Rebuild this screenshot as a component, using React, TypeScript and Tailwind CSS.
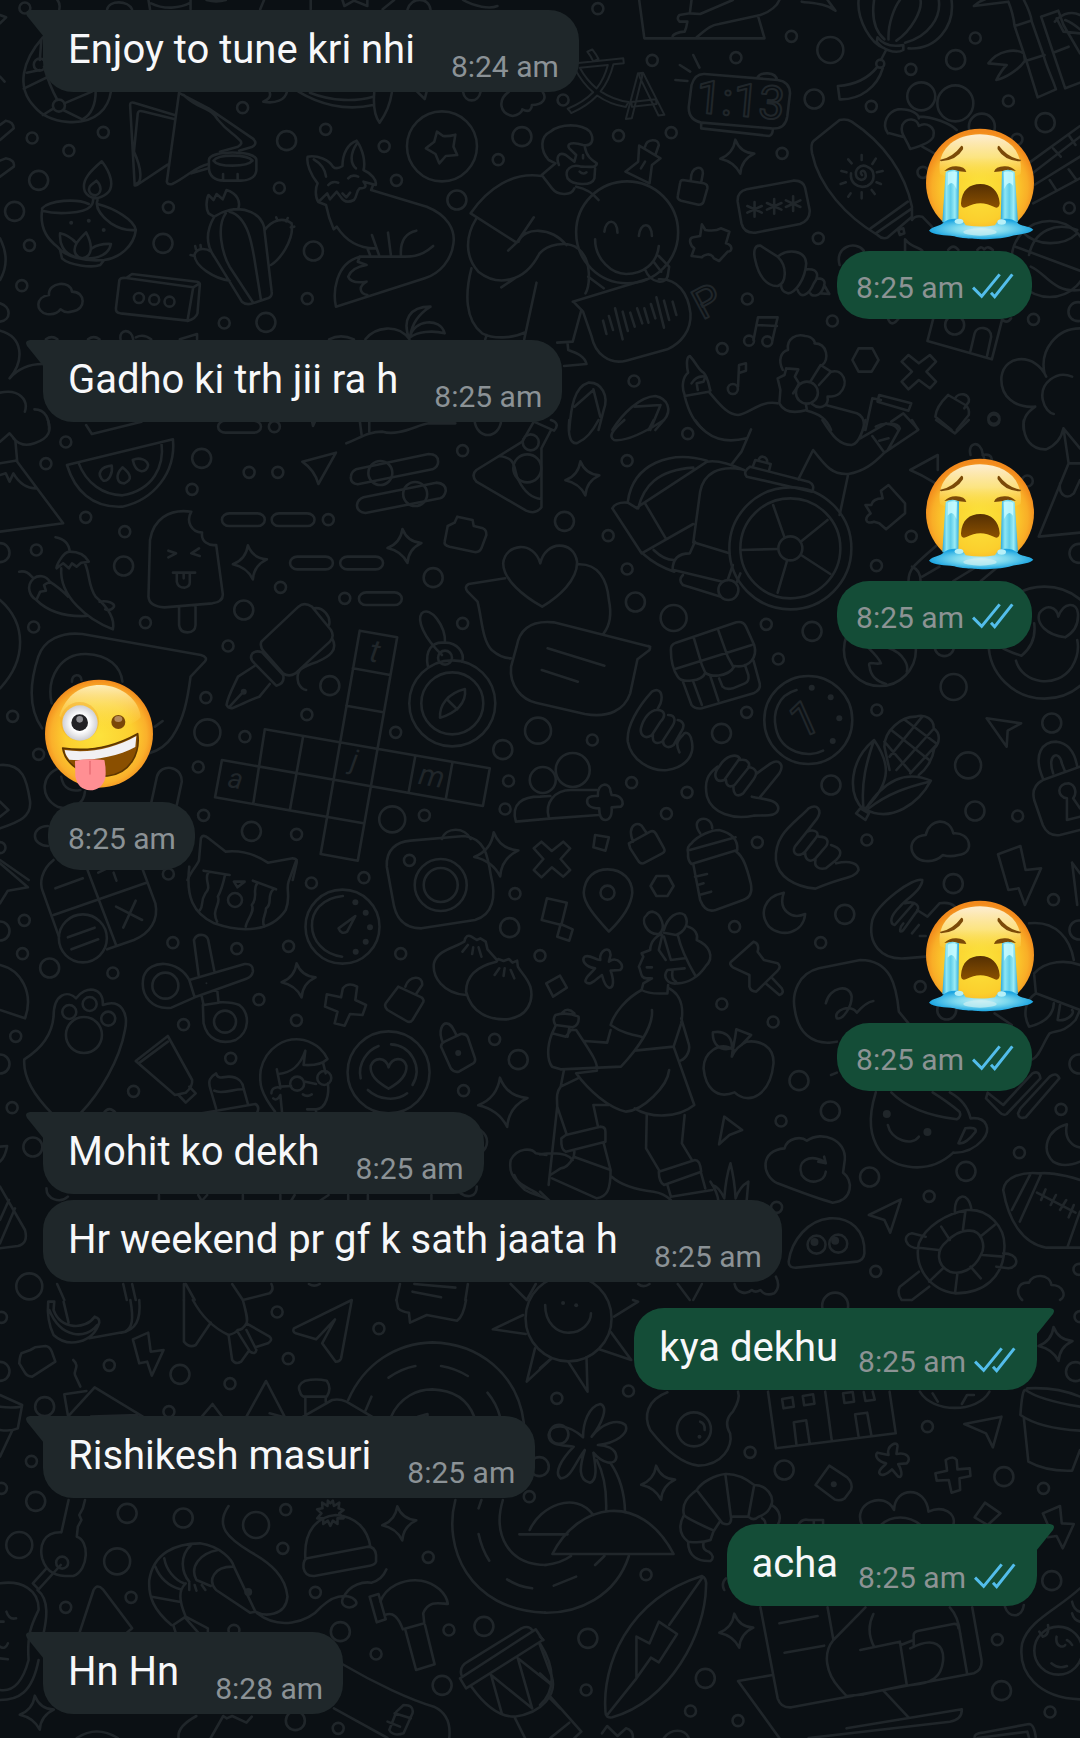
import React from 'react';
import clsx from 'clsx';

type Side = 'in' | 'out';
type EmojiName = 'sob' | 'zany';

interface Message {
    id: number;
    side: Side;
    time: string;
    text?: string;
    emoji?: EmojiName;
    tail?: boolean;
    spacing: string;
}

const messages: Message[] = [
    { id: 1, side: 'in', text: 'Enjoy to tune kri nhi', time: '8:24 am', tail: true, spacing: 'mt-0' },
    { id: 2, side: 'out', emoji: 'sob', time: '8:25 am', spacing: 'mt-9' },
    { id: 3, side: 'in', text: 'Gadho ki trh jii ra h', time: '8:25 am', tail: true, spacing: 'mt-[21px]' },
    { id: 4, side: 'out', emoji: 'sob', time: '8:25 am', spacing: 'mt-9' },
    { id: 5, side: 'in', emoji: 'zany', time: '8:25 am', spacing: 'mt-[30px]' },
    { id: 6, side: 'out', emoji: 'sob', time: '8:25 am', spacing: 'mt-[30px]' },
    { id: 7, side: 'in', text: 'Mohit ko dekh', time: '8:25 am', tail: true, spacing: 'mt-[21px]' },
    { id: 8, side: 'in', text: 'Hr weekend pr gf k sath jaata h', time: '8:25 am', spacing: 'mt-1.5' },
    { id: 9, side: 'out', text: 'kya dekhu', time: '8:25 am', tail: true, spacing: 'mt-[26px]' },
    { id: 10, side: 'in', text: 'Rishikesh masuri', time: '8:25 am', tail: true, spacing: 'mt-[26px]' },
    { id: 11, side: 'out', text: 'acha', time: '8:25 am', tail: true, spacing: 'mt-[26px]' },
    { id: 12, side: 'in', text: 'Hn Hn', time: '8:28 am', tail: true, spacing: 'mt-[26px]' }
];

/**
 * Wallpaper. Each tile has its own fine grid (about three units to a pixel);
 * x, y and sx place the grid on the wallpaper.
 */
interface Tile {
    x: number;
    y: number;
    sx: number;
    small: number[][];
    medium: number[][];
    large?: number[][];
    rings?: number[][];
    dots?: number[][];
    sparks?: number[][];
    pills?: number[][];
    letters?: { x: number; y: number; size: number; turn: number; value: string }[];
    lines: string[];
}

const SY = 1 / 3;

const tiles: Tile[] = [
    {
        x: 0, y: 0, sx: 0.38265,
        small: [[84, 414], [180, 452], [270, 397], [634, 323], [851, 388], [1004, 439], [1036, 541], [1302, 479], [730, 564], [440, 622], [77, 736], [57, 857], [586, 969], [803, 896], [65, 24]],
        medium: [[101, 541], [38, 634], [426, 730], [749, 422], [819, 753], [1194, 600], [1364, 410], [695, 967]],
        rings: [[1155, 439, 35], [363, 894, 5], [403, 899, 5], [443, 905, 5], [104, 194, 6], [154, 317, 6]],
        dots: [[186, 668, 2], [232, 662, 2], [271, 690, 2]],
        lines: [
            // beach ball
            'M112 112C60 180 40 260 90 320C130 375 220 380 260 340C280 320 288 290 290 274M108 120L104 180M104 210L70 218M115 200C125 240 135 270 150 300M130 228L62 266M140 325L112 345M168 310L240 275M165 330L215 358M250 275C250 310 240 345 215 358',
            // folded snack and dip
            'M352 556L340 315Q340 305 350 308L456 345M358 550C370 545 372 510 350 455L360 340Q362 330 372 334L455 357M352 556Q356 558 362 552L438 494M468 278L436 545Q438 555 450 552C490 530 510 500 545 492M470 280L545 325L660 415Q675 430 660 440L625 452M480 285C520 330 550 320 570 360C600 400 600 390 628 422Q635 432 622 440L575 455M500 520L545 505',
            'M546 480C546 450 670 450 670 480V510Q668 540 630 542H585Q548 540 546 505ZM558 482C570 502 645 502 660 482C645 462 570 462 558 482ZM583 540V522M621 540V522',
            // oil lamp
            'M266 484C290 520 300 560 280 580C260 600 235 600 222 575C210 540 240 510 266 484ZM252 542C268 560 265 580 250 586C232 586 228 565 238 555ZM110 625C130 600 200 595 232 612M110 632C150 645 220 640 236 620Q245 610 243 595M255 600C250 615 255 640 290 670C310 685 335 692 354 690M255 612C300 625 350 660 355 690C350 740 310 775 272 780C220 785 170 770 150 740C115 710 105 670 110 630M157 750L162 775C180 795 240 805 262 795L272 780M157 700C155 730 165 760 195 770M157 700Q180 705 200 730C190 750 195 770 215 775C240 770 245 740 225 697Q205 720 200 730M240 745Q260 730 290 732C285 760 265 775 225 776',
            'M122 942C92 935 92 890 128 885C125 845 185 840 188 875C225 875 225 930 190 934C175 940 165 935 158 928C150 942 135 944 122 942Z',
            'M303 925L312 840Q315 832 330 834L505 862L490 962L315 940Q302 938 303 925M330 834L345 822L515 845Q524 848 522 858L516 940Q512 955 490 963M505 862L522 850',
            // cactus
            'M545 640C535 620 542 590 545 585L558 600L566 582L582 598L592 570C620 580 630 605 622 628M560 650Q550 645 545 640M560 650C540 690 535 730 560 770L632 905Q645 918 665 908L700 895Q712 890 710 875L690 680C680 640 640 620 600 630Q580 635 560 650M590 640C565 680 580 760 600 800L660 905M600 635C650 650 660 740 668 800L682 900M692 690C710 660 740 650 762 670C770 720 730 780 708 795M600 842C560 835 510 800 508 765C515 740 540 745 552 755M725 662L722 652M748 664L752 654M760 682L769 680M512 748L510 738M525 745L524 735M508 768L498 765',
            // fox
            'M832 606C822 590 825 560 830 550C812 525 800 490 804 470C830 465 860 480 870 500Q880 510 895 498C895 460 910 430 932 422C950 450 955 490 950 510C970 520 985 540 982 555L950 545C960 560 955 565 940 565C930 575 935 585 925 600C905 612 895 600 890 590L880 575L862 598L855 580ZM975 555L970 570L1115 620C1170 645 1190 690 1185 730C1180 780 1150 820 1110 835L878 920C870 880 875 790 940 770H1060C1100 770 1120 750 1132 738M832 606L852 615C858 650 865 670 872 688L880 680C905 725 940 745 980 745M972 705L992 770M1014 698L1022 770M1048 770C1045 730 1055 700 1088 692M960 745L968 768M940 770L935 785L958 795C930 800 915 815 910 830C915 845 930 850 958 845C935 860 940 880 960 885M820 478C838 490 850 510 852 530M932 432C915 460 915 490 930 505M858 555Q868 542 884 548M910 535Q920 522 936 530M895 580L905 592L915 578',
            'M1142 395L1158 408Q1170 410 1190 404L1185 440L1195 465L1165 468L1148 490L1138 462L1113 445L1135 425Z',
            'M750 275C745 300 720 312 688 305Q710 295 705 278M780 275C830 310 900 335 975 315M810 278C870 305 930 305 975 290M978 278C975 320 980 350 992 368C1010 340 1020 310 1024 278M1090 275L1110 297L1115 275M1210 275C1215 310 1250 310 1256 275M1330 275C1300 300 1305 340 1340 348C1355 345 1365 335 1365 328C1385 340 1390 325 1390 315C1420 315 1430 295 1418 275',
            'M155 28Q158 10 150 0M280 28C285 0 335 0 345 28M388 0L392 28M498 0V28M395 10C430 30 470 25 498 8M540 0Q565 8 590 0M680 28L690 0M812 28V0M895 0L900 18L925 2L960 18V0M1000 28L1030 0M1065 28C1075 -10 1120 -10 1125 28M1210 0C1240 20 1280 28 1300 18',
            'M0 45L16 52L0 70M0 230L12 245M0 375L15 362Q35 365 36 385L0 420M0 482L15 475Q40 480 36 500L0 530M0 715C20 760 20 800 0 840M0 910C30 920 30 960 0 965M0 992C60 1010 65 1080 25 1135Q60 1090 115 1092M0 1178C50 1165 75 1200 65 1235M90 1228C120 1228 130 1260 128 1290',
            // sitting figure
            'M1415 528C1340 515 1275 565 1230 640L1350 728L1395 652M1350 728L1328 752M1245 655C1215 710 1215 770 1250 815C1300 860 1370 850 1410 760C1430 735 1480 720 1510 745C1550 780 1540 860 1530 880M1232 805C1215 880 1215 960 1260 1000C1290 1018 1340 1015 1370 998M1310 862L1345 835M1402 848L1370 1018M1355 725C1370 680 1440 680 1480 735M1268 1018L1272 1005',
            'M860 1018Q890 1000 925 1018M955 1018C980 980 1040 970 1070 1018C1050 960 1070 920 1125 920C1090 945 1075 980 1072 1010C1080 960 1150 950 1162 1000C1130 990 1090 995 1072 1012M120 1018Q135 1005 150 1018M230 1018Q245 1005 260 1018M315 1018C310 985 345 985 348 1018M355 1012Q375 1000 395 1018M470 1018L515 1002V1018'
        ]
    },
    {
        x: 540, y: 0, sx: 0.34439,
        small: [[168, 26], [326, 181], [569, 173], [730, 109], [67, 300], [228, 407], [381, 398], [703, 460], [808, 715], [602, 897], [849, 963], [529, 1046], [273, 1143], [1077, 208], [962, 319], [1264, 114], [1360, 303], [1537, 624], [1433, 958], [1318, 1255], [1112, 517], [1385, 418]],
        medium: [[796, 297], [1207, 179], [1467, 368], [1204, 975], [1562, 935]],
        large: [[843, 150]],
        rings: [[1107, 289, 14], [1206, 310, 18], [1283, 380, 13], [988, 191, 4], [253, 697, 51], [607, 1022, 5], [660, 1024, 5], [560, 1167, 5], [1480, 777, 38], [775, 1178, 11]],
        sparks: [[573, 470, 1]],
        letters: [
            { x: 598, y: 105, size: 66, turn: -6, value: '文' },
            { x: 645, y: 117, size: 62, turn: -6, value: 'A' },
            { x: 739, y: 116, size: 46, turn: 5, value: '1:13' },
            { x: 714, y: 314, size: 42, turn: -28, value: 'P' }
        ],
        lines: [
            'M187 695C190 655 225 655 225 698M287 708C290 665 325 665 325 708M160 718C160 780 210 822 250 822C300 822 340 790 345 738M305 808C320 850 370 860 372 820L375 800L345 768M330 785L352 815',
            // voice bubble
            'M95 905L310 838M345 838C400 835 430 880 437 940C440 990 410 1030 370 1048L250 1082C200 1095 160 1060 150 1010L125 935L97 905M183 962L193 1002M200 948L212 990M218 925L240 1018M240 935L255 993M262 938L275 980M282 925L297 970M303 925L315 968M322 912L335 955M338 892L360 983M360 902L375 960M385 905L396 945',
            'M140 830L185 865M120 930L95 1025L50 1028M105 560C130 565 155 580 170 600M80 1030L82 1050C110 1060 130 1070 135 1092L70 1098',
            'M100 565C90 590 50 585 35 565L5 525L45 490L25 480C0 450 0 410 30 395C60 370 120 370 145 395C160 420 150 440 125 435C95 425 75 430 85 445L105 465L100 485L75 465C55 455 45 470 55 495M130 440C135 470 150 480 165 490C165 505 140 500 120 500C90 490 70 510 80 535C95 555 150 560 158 535L160 505M115 515Q125 525 135 517M125 465V475',
            // lantern
            'M925 0C920 60 960 130 1000 145M970 0C960 70 980 100 1000 118M1012 118C1010 70 1030 20 1045 0M1060 128C1130 110 1165 50 1158 0M1070 145C1150 150 1205 80 1195 0M1035 122C1080 90 1110 30 1105 0M980 112C1000 140 1030 140 1055 135V150C1030 165 990 145 978 125ZM1005 150L990 180M980 200C950 240 910 255 865 258L870 298C930 300 980 260 995 205',
            'M288 0L303 115H652L633 48M440 0L435 40L405 45Q395 55 405 65H428Q425 85 420 95C400 95 385 105 385 110M435 40L465 42L560 0M455 112C490 80 500 75 520 72L640 45C670 35 690 15 695 0M760 5C790 10 830 10 858 32L835 0',
            // alarm clock
            'M478 222L690 240Q725 245 726 280L718 350Q712 390 670 385L470 368Q430 360 432 320L440 255Q450 220 478 222ZM468 368V385L665 408Q675 405 676 390M632 232C640 215 685 215 688 240M445 165L463 203M406 195L436 215M393 240L428 243',
            'M288 437L350 475L325 495L318 550L248 515L285 485ZM305 440C310 415 345 415 345 435L335 465M305 485L293 505',
            'M415 540L475 550Q488 553 486 565L475 605Q472 615 460 614L410 602Q398 598 400 588L407 548Q408 540 415 540ZM438 540C438 495 475 495 473 520L468 548',
            'M600 568L735 542Q765 540 770 565L783 630Q785 660 755 672L625 698Q592 700 585 670L574 605Q572 575 600 568ZM623 606V650M602 618L644 638M602 638L644 618M680 597V641M659 609L701 629M659 629L701 609M735 589V633M714 601L756 621M714 621L756 601',
            'M470 673L480 690Q510 695 525 685L550 695L540 730C560 735 560 755 545 755L520 783L505 775C495 755 475 765 470 772L440 768L448 745C435 735 430 715 445 712L465 708Z',
            // shell
            'M640 737C620 735 620 760 625 780C635 830 660 860 690 858C715 850 720 800 690 770ZM690 770C720 745 770 750 773 790C770 840 740 880 720 880C700 875 700 860 700 855M775 808C810 805 810 830 795 850C780 890 755 895 748 870M805 835C830 835 830 850 820 870C810 890 790 890 785 880M825 855L840 882L815 880',
            'M620 1020L633 952H690L675 1020M630 975L688 978M575 1160L578 1095L598 1090V1112L580 1118',
            // lotion
            'M870 360Q890 355 905 365C1000 430 1060 520 1080 620L1080 650L1010 712Q995 720 980 705C890 650 810 560 790 460Q785 430 795 422ZM960 685L1068 605M975 700L1080 625M1080 660Q1090 645 1110 650L1138 680M1040 690L1055 685L1058 700L1045 705ZM935 525C925 515 940 505 945 520C950 540 930 545 920 532C910 510 930 490 950 500C975 510 975 545 950 558C920 568 900 545 903 520M934 465V480M934 577V595M975 476L965 492M895 478L905 490M875 513L890 517M995 513L978 517M990 552L977 547M873 552L888 547M902 580L895 590M963 570L972 582',
            'M1010 400C990 370 1010 335 1040 328C1080 325 1100 345 1100 355M1015 400L1058 412M1100 350C1140 350 1190 370 1210 390M1110 440L1145 460M1075 447C1060 410 1045 400 1052 375C1065 350 1095 355 1100 378C1120 365 1150 380 1142 410Q1135 430 1075 447Z',
            // bamboo
            'M1260 18L1360 5C1370 30 1375 50 1378 78L1412 182L1445 292L1498 268C1490 240 1470 200 1462 165L1428 65C1425 40 1415 20 1405 0M1260 18Q1280 0 1300 -5M1378 78L1425 62M1412 182L1465 165M1455 50L1490 158L1525 265L1568 248M1455 50L1505 32L1520 75L1568 160M1490 158L1535 140M1302 190C1330 150 1380 145 1405 160L1408 182C1390 210 1350 235 1325 240Q1340 210 1355 195ZM1495 65C1520 35 1550 35 1568 45M1500 55L1520 95L1568 100M1525 60Q1545 68 1568 88',
            'M1425 485L1568 378M1430 520L1568 410M1435 555L1568 470M1432 610L1568 535M1490 445L1512 470M1535 405L1555 435M1480 540L1500 572M1535 508L1558 540',
            'M1380 740L1568 812M1420 765C1435 690 1500 665 1560 690M1400 695C1440 740 1520 740 1560 700M1425 800C1470 820 1490 880 1568 870',
            'M870 795C855 740 915 720 940 752M1060 752V718C1080 745 1100 740 1110 752M1185 750Q1200 730 1215 750M1270 750Q1280 735 1290 748Q1300 735 1315 750M1010 955Q1020 985 1042 955',
            'M1142 955L1125 1023L1312 1078L1342 958M1250 1053L1262 1000C1270 975 1310 980 1310 1010L1298 1068M1340 955Q1355 975 1368 955',
            'M925 1045H965L983 1080L963 1115H925L907 1080Z',
            'M1050 1085L1070 1065L1100 1090L1132 1065L1150 1085L1122 1115L1150 1145L1132 1165L1100 1140L1070 1168L1050 1145L1080 1115Z',
            // dancer
            'M705 1110C690 1080 700 1055 720 1050C715 1015 745 1000 770 1008C795 1010 800 1030 797 1030C835 1030 840 1080 820 1095M715 1105L750 1108L740 1130L752 1150L745 1165L735 1180M715 1105L710 1125L690 1135L698 1170L695 1210C710 1240 740 1240 775 1230L772 1212M785 1145L815 1095L845 1115L810 1155M845 1115C880 1105 900 1150 870 1180C860 1190 835 1190 835 1190C840 1220 810 1230 790 1212',
            'M420 1188L490 1175C530 1225 550 1245 575 1245C610 1240 640 1200 690 1210M420 1188C430 1230 450 1270 475 1290M775 1232C810 1240 835 1260 845 1290M830 1215L920 1240Q945 1250 940 1290M420 1185C410 1160 415 1130 430 1118C425 1095 425 1070 435 1068C455 1090 460 1110 475 1118C490 1135 490 1160 495 1172M440 1150Q455 1125 480 1130L475 1145L455 1150L458 1170',
            'M945 1290L965 1195L990 1200M985 1185L1078 1210L1070 1232L980 1205ZM975 1280C1000 1265 1030 1270 1040 1290M1020 1265L1055 1240L1098 1288M1185 1185L1235 1215Q1248 1225 1245 1245L1210 1290M1185 1185Q1150 1220 1148 1250L1195 1290M1205 1195C1215 1175 1250 1180 1245 1205L1232 1225',
            'M1568 985C1500 985 1450 1050 1465 1120M1470 1130C1440 1060 1350 1060 1340 1130C1335 1190 1380 1225 1438 1220C1410 1240 1400 1260 1405 1290M1545 1130C1500 1110 1450 1150 1460 1200C1465 1225 1480 1240 1492 1242',
            'M85 1290C90 1220 100 1160 140 1148C180 1145 200 1190 185 1230L170 1290M155 1170L100 1220M155 1168L175 1250M210 1290C240 1240 290 1190 335 1188C370 1195 385 1230 360 1260L335 1290M350 1215L275 1220M350 1215L320 1290'
        ]
    },
    {
        x: 0, y: 420, sx: 0.38265,
        small: [[120, 131], [172, 66], [502, 208], [224, 292], [326, 335], [95, 390], [88, 621], [380, 608], [651, 157], [726, 157], [733, 502], [858, 299], [717, 20], [901, 535], [596, 678], [538, 833], [802, 884], [640, 950], [1034, 937], [518, 1041], [532, 1186], [775, 1243], [1109, 1186], [1209, 92], [1209, 610], [1329, 1083], [1320, 1167], [101, 1003], [33, 889], [440, 1362], [0, 1283], [1070, 1321]],
        medium: [[527, 115], [323, 438], [637, 570], [1132, 473], [862, 797], [657, 1234], [1314, 989], [0, 398]],
        large: [[542, 937], [1025, 1198], [1406, 932]],
        rings: [[994, 159, 12], [1085, 222, 12], [1387, 67, 8], [1378, 145, 14], [1182, 850, 43], [1182, 850, 31], [1163, 713, 7]],
        dots: [[637, 815, 3]],
        sparks: [[653, 427, 1], [1057, 378, 1], [1297, 1303, 1.3]],
        pills: [[580, 280, 112, 38], [710, 280, 112, 38], [758, 410, 112, 38], [889, 410, 112, 38], [938, 517, 112, 38], [570, 2, 112, 36]],
        letters: [
            { x: 373, y: 662, size: 32, turn: 10, value: 't' },
            { x: 353, y: 769, size: 28, turn: 10, value: 'j' },
            { x: 234, y: 788, size: 28, turn: 10, value: 'a' },
            { x: 430, y: 786, size: 30, turn: 10, value: 'm' }
        ],
        lines: [
            // watermelon
            'M175 135L452 58C460 160 400 240 320 260C240 265 195 210 175 135ZM205 128C225 190 270 225 320 226C400 210 430 140 422 68M270 182C250 160 265 140 292 137C295 160 285 185 270 182ZM320 142C300 165 305 190 325 190C345 180 345 165 320 142ZM347 120C365 110 385 120 387 135C385 160 355 165 347 120Z',
            'M790 125L878 98L832 192Q822 150 790 125Z',
            'M930 148L1120 102Q1145 102 1145 125Q1145 140 1130 148L935 193Q915 190 917 170Q918 155 930 148ZM950 232L1140 188Q1165 190 1165 212Q1162 230 1150 235L955 279Q932 275 933 255Q935 238 950 232Z',
            'M1365 65L1245 150Q1230 165 1245 185L1375 272Q1400 285 1415 262V85L1440 30M1305 108C1355 115 1340 150 1355 180C1370 215 1390 235 1415 237M1365 65L1395 5L1448 32Q1465 10 1440 0',
            'M905 70C940 55 960 35 1000 35C1040 50 1090 15 1120 10H1190M940 0L945 45M965 0V35M225 15L240 42L370 5M815 0L818 18L825 0M1240 0C1245 60 1305 60 1310 0',
            'M0 335L165 310L45 125L40 60L25 40L0 65M0 130L40 122M0 165L15 160L25 185L35 160C50 190 70 205 95 205M35 55C50 75 70 78 90 70C130 55 135 30 125 0',
            // ice cream
            'M388 530L392 360C400 300 440 265 500 275C485 305 500 335 528 338C525 365 545 378 565 375L582 520Q585 545 555 550L430 562Q390 560 388 530ZM468 563V615Q470 637 490 637Q510 637 511 615V560M440 392L460 400L440 412M520 385L500 400L522 408M452 458L510 458M462 460V485Q465 503 482 503Q497 500 496 485V460M480 462V475',
            // chillies
            'M145 352Q180 360 182 395C165 395 145 440 148 445L165 430L180 445L188 430L200 440L212 428L232 425C220 400 200 395 182 395M160 445C155 530 230 600 295 628C300 600 290 570 250 530C230 500 235 460 222 430M50 455C75 450 80 470 88 475C65 500 80 530 95 540L105 515L120 512L115 495L130 485C120 465 100 465 88 475M95 540C130 580 180 590 225 588M130 485C150 500 170 520 178 530M260 545C280 540 300 550 298 560Q290 575 275 568',
            'M1170 318L1188 308L1195 290L1235 300L1238 318L1262 325Q1272 330 1271 345L1258 385Q1253 398 1240 396L1175 380Q1160 375 1162 365Z',
            'M1417 560C1370 530 1315 480 1315 430C1320 370 1395 360 1412 430C1425 360 1500 360 1508 425C1510 480 1460 530 1417 560Z',
            'M1320 475L1225 492Q1212 500 1222 515L1248 545C1260 600 1260 660 1285 690Q1310 715 1335 715',
            // fountain pen
            'M683 665Q678 680 690 695L740 760Q755 772 772 760L862 665Q875 650 865 630L815 560Q795 545 780 560ZM660 700Q670 690 685 697L740 765Q745 790 722 797L665 730Q650 715 660 700ZM665 738L622 770C610 800 595 830 592 855Q598 868 610 863C640 850 660 835 678 830L705 792M600 860L632 820M820 565C845 560 865 590 860 615M868 655C885 690 860 710 830 725C790 740 770 750 780 790Q788 808 800 810',
            // crossword
            'M940 632L1038 652L935 1322L838 1302ZM922 745L1020 765M905 857L1002 877M692 928L1280 1045L1262 1158L580 1020L562 1132L950 1210M692 928L662 1150M792 950L758 1168M1085 1010L1068 1117M1182 1030L1165 1137',
            // compass
            'M1118 738C1110 690 1130 665 1160 668C1195 665 1215 700 1208 725M1155 705C1105 650 1090 600 1102 580C1125 555 1165 620 1163 668M1215 807C1220 850 1190 880 1150 893C1148 855 1170 820 1215 807ZM1170 840L1195 868',
            'M110 925C70 860 80 780 100 710C115 660 160 635 215 642L525 705Q545 712 535 725L498 770C490 840 480 900 450 950Q430 985 390 1000M135 850C120 770 160 700 225 702C285 705 315 740 320 785M188 785C188 760 212 760 213 780M405 920L425 903M0 540C70 610 70 720 0 805M0 1035C60 1030 70 1080 78 1140C85 1190 50 1205 0 1225M0 1145L22 1170L0 1190M155 1045C110 1060 100 1130 150 1160C190 1175 220 1150 222 1115M160 1070C165 1110 190 1115 210 1110M395 1150L410 1070C420 1030 475 1035 475 1085L462 1155M125 1218C80 1220 80 1275 125 1278M0 1320L75 1380',
            'M490 1380C500 1350 520 1330 520 1320L525 1255Q530 1240 545 1255L590 1295C630 1290 670 1305 700 1328L765 1315Q778 1315 775 1330L765 1380',
            'M1155 1257C1165 1220 1215 1220 1230 1257M1395 1285L1415 1265L1442 1293L1472 1265L1490 1285L1465 1317L1490 1350L1472 1370L1442 1342L1415 1372L1395 1350L1420 1317Z'
        ]
    },
    {
        x: 540, y: 420, sx: 0.34439,
        small: [[429, 41], [253, 122], [198, 347], [253, 447], [657, 613], [692, 717], [600, 877], [152, 960], [266, 1088], [367, 1181], [427, 1117], [631, 1267], [949, 1260], [977, 437], [978, 870], [1078, 349], [1387, 1188], [1318, 0], [1415, 183]],
        medium: [[71, 304], [277, 546], [790, 634], [527, 940], [845, 1095], [1486, 909], [1263, 1173], [1565, 400], [1174, 680]],
        large: [[388, 594], [1201, 801], [1243, 1036]],
        rings: [[727, 385, 61], [727, 385, 50], [727, 385, 12], [547, 510, 10], [1465, 668, 56], [987, 690, 36], [779, 900, 44], [8, 1080, 13], [95, 1050, 17]],
        dots: [[789, 803, 3], [844, 832, 3], [869, 895, 3], [850, 963, 3]],
        sparks: [[123, 175, 1]],
        letters: [{ x: 811, y: 734, size: 48, turn: -24, value: '1' }],
        lines: [
            'M85 0C80 50 90 75 110 68C140 55 160 20 170 0M245 0C205 35 200 50 215 60C250 65 300 40 360 0M315 30L330 0M450 0C490 60 540 70 600 55M613 28L585 95L555 135',
            // wheelchair
            'M710 352L677 255M757 365L835 300M758 405L843 462M718 420L690 518M690 387L583 390M485 122C380 90 270 130 255 245M210 265Q220 245 255 248L282 265M210 265L295 400L445 312M305 250L365 355M282 262L485 125C520 118 560 135 592 150M285 265C300 200 340 150 445 143M450 365L435 400C400 400 385 420 385 450M445 368L465 215C475 160 520 135 585 148M450 368L550 400M330 390C350 410 370 420 388 420M300 402C330 430 360 445 390 455M388 450L530 485M610 140L780 185Q800 195 790 215L600 170Q588 155 610 140ZM618 140L625 120L670 132L665 152M635 122C635 105 660 105 660 128M415 465Q400 480 415 495L525 530M545 480L560 435M572 485L582 460',
            'M750 178L793 90C830 140 850 165 895 162L870 285M895 162C940 155 970 130 1000 98L965 48M820 0C850 50 870 75 905 75C930 70 940 20 945 0M930 55L1005 10M1010 12Q1040 10 1045 25L1010 90M1000 98L1098 30L1080 0M985 62L1012 55M1150 0L1205 40L1245 0',
            'M1155 105Q1110 130 1075 150Q1110 165 1145 188M1155 105L1155 150M1250 105C1240 65 1280 60 1285 100L1290 115M1285 105Q1310 100 1312 118',
            'M1012 195L990 212L995 235C975 235 965 240 962 255L945 255L960 280C940 295 945 315 970 305L985 310L1005 328L1060 280V250Z',
            'M1405 0C1400 60 1430 90 1470 88C1500 75 1515 50 1520 25L1568 85M1520 25L1535 130L1448 350L1568 338M1535 130H1568M1510 190C1505 225 1530 240 1550 220L1568 180',
            'M1070 483C1070 450 1080 440 1150 378M1080 440Q1105 450 1105 483M1110 470L1160 440M1200 483L1260 445M1280 483L1330 440',
            'M1382 722C1400 790 1500 810 1545 740Q1568 700 1560 660M1525 652C1470 645 1440 610 1450 580C1470 550 1500 560 1505 590C1520 545 1560 545 1562 580C1565 620 1545 640 1525 652ZM1435 610C1440 650 1430 680 1398 707Q1360 695 1340 682',
            'M955 685C970 700 985 715 990 730C970 735 950 720 957 740C960 770 980 785 1005 792M1010 683C1060 700 1070 740 1065 755',
            // chat bubbles
            'M110 433C170 430 195 480 200 540C210 590 200 620 185 640M320 680L40 607C-30 600 -60 630 -68 680L-84 740C-90 800 -50 840 -12 848L130 882C200 895 245 870 262 820L283 718L318 690Q322 682 315 678M22 685L187 737M5 750L110 785',
            // present
            'M380 690Q378 675 395 668L570 607Q590 602 598 620L622 675C632 710 610 745 565 738C545 775 490 770 480 758C470 785 410 790 400 770Q380 740 380 690ZM390 748L615 675M447 655L470 735L480 758M518 632L545 710L560 738M415 785L440 855Q450 868 470 865L620 820Q642 810 638 790L620 722M445 785L470 855M495 770L518 842M520 775L530 800Q540 810 560 805L595 790Q608 785 605 765L595 735',
            'M745 810C690 825 675 880 685 925C700 1000 780 1015 822 992',
            // hands
            'M325 815C285 860 250 920 255 965C265 1020 320 1055 370 1050C430 1040 450 1000 440 960C435 935 420 935 415 945M325 815C350 800 358 825 350 850L340 870C365 870 365 890 350 905L325 945C305 960 290 945 293 925C300 895 320 870 340 870M372 885C395 885 395 905 380 925L355 965C335 975 325 965 328 945M400 900C420 905 420 920 410 935L388 975C370 990 355 975 358 960M415 945C395 965 395 975 405 997',
            'M520 1040C540 1005 570 1000 580 1015L535 1080C510 1090 500 1065 520 1040ZM580 1020C605 1015 615 1035 600 1050L565 1095C550 1105 540 1095 540 1080M605 1040C630 1045 635 1060 615 1085L590 1120C570 1135 560 1120 562 1100M630 1060L670 1030C695 1015 710 1035 695 1060L640 1130M615 1130C660 1140 690 1140 692 1165C690 1190 660 1185 620 1187C560 1200 500 1180 485 1130C475 1080 490 1060 515 1040',
            'M685 1320C680 1240 740 1210 780 1165C805 1150 820 1170 805 1195L775 1235C800 1225 815 1240 800 1255L770 1295C750 1315 730 1300 740 1280L775 1235M810 1250C840 1250 840 1270 825 1285L800 1315C785 1330 770 1320 770 1300M845 1275C875 1285 880 1300 860 1320L830 1345C810 1350 795 1340 800 1320M860 1330C900 1320 925 1330 925 1350C915 1375 880 1370 800 1406C740 1400 690 1370 685 1320',
            // corn
            'M1000 980C1000 930 1050 890 1090 890C1120 880 1145 900 1143 925C1165 940 1160 970 1145 985C1140 1020 1120 1050 1100 1065M1000 980L1015 1050M1060 900L1150 970M1020 930L1130 1020M1000 965L1075 1055M1110 890L1015 1010M1140 930L1035 1050M1155 970L1075 1060M970 960C900 1020 890 1120 940 1170C930 1090 950 1020 970 960ZM970 960C1010 1020 1030 1080 945 1165M945 1168C1000 1080 1060 1050 1135 1082C1100 1150 1020 1210 945 1168ZM955 1165C1010 1120 1070 1100 1130 1085M930 1165L918 1180L945 1200L955 1180Z',
            'M1297 895L1397 910L1358 932L1355 980Z',
            'M1460 1075C1430 1000 1460 965 1500 965C1540 970 1555 1010 1560 1040M1568 1040L1460 1080Q1425 1100 1435 1140L1460 1215Q1475 1250 1510 1245L1568 1230M1490 1060C1470 1000 1510 990 1515 1030L1525 1055M1530 1135L1530 1200L1568 1190M1530 1135C1500 1130 1500 1090 1535 1090C1555 1095 1560 1120 1548 1135L1568 1165',
            'M25 1190C15 1150 40 1110 90 1110H165M35 1195L170 1185M-70 1205C-85 1150 -50 1130 0 1130L30 1128M-70 1205L35 1195M168 1128C165 1085 205 1085 205 1115L208 1125C240 1125 245 1150 235 1160L208 1162C210 1190 200 1200 190 1200C175 1200 172 1185 172 1165C145 1165 135 1155 137 1140C140 1125 160 1128 168 1128Z',
            'M258 1270L320 1235Q330 1230 337 1242L360 1285Q365 1295 355 1300L300 1330Q290 1332 285 1322L262 1285ZM270 1265C250 1210 290 1200 300 1225L310 1240M160 1245L200 1252L190 1292L155 1282Z',
            // bottle
            'M430 1300Q425 1280 440 1270C460 1245 500 1230 520 1230C560 1240 575 1260 573 1290L440 1332Q428 1320 430 1300ZM435 1290L568 1252M465 1240C430 1190 500 1180 500 1225M445 1332L465 1440Q480 1480 510 1470L590 1440Q620 1430 612 1390C600 1340 590 1310 570 1295M450 1370L485 1362M458 1395L475 1390M462 1425L497 1415',
            'M1120 1323C1070 1320 1060 1250 1120 1245C1130 1195 1190 1190 1200 1240C1250 1235 1265 1300 1215 1305C1190 1312 1180 1308 1170 1305C1155 1320 1140 1325 1120 1323Z',
            'M1330 1303L1395 1278L1410 1350L1455 1345L1408 1455L1390 1405L1360 1410ZM1545 1328L1568 1360M1545 1328L1560 1455'
        ]
    },
    {
        x: 0, y: 860, sx: 0.35714,
        small: [[68, 181], [63, 281], [316, 339], [484, 248], [663, 266], [808, 259], [872, 69], [1019, 53], [1122, 281], [725, 419], [514, 494], [830, 481], [646, 595], [374, 694], [44, 529], [34, 743], [1442, 101], [1385, 538], [1298, 692]],
        medium: [[139, 324], [1427, 203], [1451, 599], [92, 861], [0, 213], [0, 612]],
        large: [[82, 1279]],
        rings: [[232, 235, 24], [658, 120, 7], [959, 200, 37], [1234, 75, 26], [1234, 75, 17], [463, 377, 13], [630, 485, 11], [194, 456, 7], [251, 432, 7], [303, 476, 7], [235, 525, 18], [832, 671, 7], [908, 654, 7], [1088, 637, 41]],
        dots: [[995, 127, 3], [1024, 158, 3], [1036, 202, 3], [1024, 245, 3], [996, 275, 3], [1283, 579, 3], [578, 370, 1]],
        sparks: [[836, 361, 1], [1408, 727, 1.45]],
        lines: [
            'M150 0C115 30 110 70 120 95L165 230M245 30L325 255M150 165L410 68M400 30L435 130C445 180 420 220 375 240L300 268M155 85L232 55M190 232L265 203M200 268L275 238M325 140L398 180M380 122L345 203M318 38L326 62M275 38L300 25',
            // cat
            'M530 20C520 110 540 160 600 190C680 220 760 215 800 150C815 110 800 90 808 65L830 0M570 32L643 45M583 38C570 60 595 80 575 100C560 125 570 140 560 150M630 45C625 70 620 90 610 110C620 130 590 150 608 185M708 62L773 88M720 70C705 90 725 110 705 135C715 155 690 180 688 200M765 88C745 110 765 130 745 145C745 165 730 180 740 200M655 65H685L665 82Z',
            'M960 108C840 120 850 275 958 290M995 168L972 215Q955 225 948 205Z',
            // camera
            'M1083 20C1080 -30 1110 -55 1150 -58L1300 -72C1355 -65 1365 -20 1375 50C1390 110 1380 165 1330 180L1180 205C1120 205 1105 160 1100 120Z',
            // dumplings
            'M1305 405C1240 400 1210 350 1215 310C1225 270 1270 265 1300 245Q1305 220 1320 230L1335 240L1345 235L1360 245L1365 268L1390 298M1390 305C1330 320 1305 350 1305 395C1320 460 1370 480 1420 478C1480 470 1495 420 1485 380C1475 350 1460 340 1450 320L1448 302L1435 308L1425 297L1410 303L1395 297L1390 305M1310 255L1295 275M1325 262L1322 282M1340 262L1348 290M1398 325L1385 345M1413 325L1410 348M1430 330L1440 355',
            // scissors
            'M530 360C500 300 420 295 402 350C390 410 430 450 480 443L545 412M530 360L685 312Q710 310 708 335Q705 350 690 356L545 412ZM556 345L543 240Q550 222 568 225Q580 228 583 240L600 332M565 410L570 435L612 428L608 388M568 435L570 490C580 540 620 555 660 540C700 515 700 460 670 435Q650 425 612 427',
            'M960 385Q975 365 1000 380L995 420L1025 435L1015 465L980 462L965 497L937 490L945 455L910 440L915 403L955 412ZM1115 380L1180 412Q1190 420 1183 430L1155 480Q1148 490 1138 483L1085 450Q1075 440 1080 430ZM1135 380C1145 345 1185 345 1182 375L1165 402',
            'M145 760C80 690 65 640 68 598C110 570 145 530 150 470C150 400 190 390 213 415C240 375 290 380 288 435C340 415 360 460 350 510C335 600 280 700 225 760',
            'M0 315C60 330 95 400 70 475L0 450M0 10L78 82L22 92L0 130',
            'M380 603L470 528L538 660Q540 680 520 698L490 705ZM388 610L470 545M500 705L520 728L548 700L530 680',
            'M605 745L590 690C580 660 590 650 605 640C610 660 625 650 640 650C670 650 680 670 682 685L695 735M600 692C620 705 660 685 682 688M565 760L715 732Q728 740 720 758M290 760Q305 735 325 760',
            // face with glasses
            'M770 755C730 700 725 670 730 630C745 560 800 530 850 540C890 550 910 580 917 597C895 620 860 615 850 615L855 572C840 620 810 640 780 642M775 628L785 680M760 700C760 680 780 680 785 685M765 715Q775 725 785 705L790 760M785 680L815 678M855 665L885 672M905 610L912 640M918 670C922 700 915 745 885 748H860M885 748V760M848 703Q860 712 873 703',
            'M1010 655C1000 610 1030 570 1060 558M1095 553C1150 555 1185 620 1155 675M1030 690C1060 720 1110 725 1140 700M1088 686C1055 665 1035 645 1038 618C1048 590 1080 590 1088 622C1098 590 1130 590 1138 618C1140 650 1115 670 1088 686Z',
            'M1235 560Q1235 550 1245 545L1290 522Q1305 520 1310 532L1330 595Q1332 605 1325 610L1285 635Q1270 638 1262 625ZM1240 548C1225 510 1240 490 1250 490C1265 490 1270 510 1278 525',
            'M130 985C130 1020 170 1030 190 1010M445 1005V1023M555 1005L565 1023L580 1005M680 1005V1023M785 1005V1023M825 1005L815 1023M920 1005L895 1023M975 1005V1023M1030 1005V1023M1208 1005V1023M1290 1000C1310 1015 1335 1010 1335 980M1345 810C1370 830 1370 860 1345 880',
            'M0 980L70 1110Q80 1150 50 1158L0 1165M25 1020L0 1080M42 1045L0 1150M0 860L20 858Q15 890 0 905',
            'M1540 1023C1510 1000 1500 1010 1470 990C1430 950 1425 930 1430 900C1450 860 1490 865 1500 880L1530 885M1440 945C1450 980 1490 985 1510 1005',
            'M160 1272L180 1320M345 1272L355 1320M370 1272L380 1320M515 1272V1320M520 1272L545 1320M650 1272L680 1320L755 1300Q768 1290 760 1272M1120 1272L1110 1320M1155 1295L1235 1312M1160 1272L1275 1283M1310 1272L1303 1320M1430 1272L1475 1320L1500 1272M865 1272Q880 1282 895 1272'
        ]
    },
    {
        x: 540, y: 860, sx: 0.34439,
        small: [[565, 200], [815, 248], [528, 432], [677, 486], [700, 783], [687, 1042], [1491, 119], [1104, 380], [1392, 878], [1513, 748], [1130, 1009], [975, 1234], [0, 287], [1565, 1228]],
        medium: [[885, 163], [1200, 71], [752, 662], [843, 753], [1237, 934], [957, 951], [1181, 450], [1565, 210], [1565, 612]],
        large: [[857, 1337]],
        rings: [[196, 98, 7], [803, 1154, 9], [866, 1151, 9]],
        dots: [[1007, 762, 4], [1125, 816, 4], [797, 1146, 4], [857, 1142, 4]],
        lines: [
            'M200 215C160 170 127 130 127 98C130 50 160 28 197 28C240 28 268 60 268 98C265 140 235 180 200 215ZM338 48H372L388 78L370 108H338L321 78Z',
            'M20 115L78 128L62 195L5 180ZM60 192L95 208L85 242L50 230ZM18 370L58 347L78 383L38 410Z',
            'M175 300C170 270 205 255 205 285L200 305C225 285 250 320 232 330L205 332C215 360 215 385 200 383C190 380 185 365 180 345C160 360 145 380 132 365C130 350 150 340 160 325C130 320 120 300 130 290C145 282 160 300 175 300Z',
            // hiker
            'M320 270C320 240 345 225 352 222M310 165C290 180 310 225 345 222C370 205 350 160 328 155Q315 155 310 165M360 210C370 170 400 150 420 165C435 190 420 215 395 225L360 218M355 225L345 270L365 300M360 230L380 300L420 295M400 225C410 270 430 310 450 345M430 200C450 205 460 225 455 240C490 255 510 290 480 320C460 350 430 370 400 370C370 375 355 350 370 330L420 325M320 270L295 280L300 290L287 320C295 335 290 355 310 355H322M310 322H325M325 355L300 370L295 390C320 405 350 400 370 400L372 375M385 330Q380 360 395 365',
            'M295 390C250 415 215 460 205 495C240 520 270 525 295 530M325 450C330 500 280 570 235 620L60 628M205 510L195 548L130 543M375 385C420 410 415 460 410 490L388 560L275 572M388 560L448 735C400 775 320 775 275 745M410 475L430 545C440 570 425 595 408 602M375 630C370 680 300 750 250 755C200 745 140 690 105 640L165 632C170 610 150 580 105 510L90 510L75 530L35 520C20 560 20 600 35 620L60 628M45 465Q35 480 45 495L95 502Q115 495 112 470Q80 455 45 465ZM65 458Q80 440 100 460M35 520L45 498M80 530L85 505',
            'M70 628L60 680C45 700 50 720 50 740L78 825M60 680L110 655M155 735L168 798M155 735H200M50 740L25 975M75 825L175 800Q190 800 190 815V845L75 875Q60 870 62 835ZM185 850L205 930C205 990 195 1010 165 1015L35 955M100 875L98 890L205 930M98 890Q80 925 60 925L30 945M310 762L308 865L348 935M420 765L412 850L440 898M345 935L450 900Q465 900 468 935L360 975Q345 965 345 935ZM468 940L480 985M370 975L380 1010L500 990M208 950C240 980 290 990 330 995Q360 1000 380 1020M495 965Q515 995 518 1023M500 975Q520 980 535 1015Q540 950 553 910Q565 960 568 1015Q580 980 605 965L600 1023M0 883C50 875 80 880 95 900M0 995L25 1020',
            'M708 98C650 110 635 160 665 200C700 235 765 220 770 162C730 180 690 150 708 98Z',
            'M620 245Q638 250 632 275L650 300L690 310Q702 320 690 332L628 395Q612 395 608 380V345L560 322Q548 312 555 305ZM655 370L695 405Q710 400 702 385L675 355',
            'M563 570C520 540 475 580 475 625C480 680 510 720 565 697C610 740 670 700 678 610C680 560 640 540 600 545Q570 560 557 590C560 560 565 550 570 508L613 525L585 555M557 565C520 575 500 550 502 517C535 510 560 530 557 565',
            'M1070 490L1042 455C1035 380 1020 300 930 300L810 325C750 340 730 400 740 450C750 520 790 550 840 548L862 545M830 430C840 380 900 370 905 410C905 440 880 480 862 475C850 450 905 430 920 458C935 440 955 425 968 423',
            'M1110 60C1085 50 980 130 965 180C950 250 990 300 1060 295L1120 290M1110 60C1110 90 1060 120 1045 140C1015 170 1015 190 1030 195L1085 130M1060 130C1090 120 1110 140 1090 160L1055 210C1040 225 1045 200 1055 190M1095 150L1125 170L1160 130Q1190 125 1205 140M1100 195L1080 220M1103 228H1120',
            'M1420 190C1500 180 1540 240 1550 300M1435 340C1470 300 1530 300 1568 315M1435 345L1440 400L1568 450M1440 400C1410 420 1400 460 1420 500C1460 490 1490 470 1492 430M1510 435L1503 480C1530 485 1555 460 1545 450M1568 450L1555 480C1520 520 1500 510 1480 520C1460 550 1450 590 1430 598M1320 460L1370 495M845 645L862 638',
            'M1300 698L1345 735L1430 640Q1450 630 1453 655L1355 762Q1345 768 1335 757L1295 715ZM1395 745L1480 650Q1500 635 1508 655L1410 772Q1390 778 1388 760Z',
            // cup
            'M975 697C950 780 960 830 985 870C1030 930 1130 945 1200 878M1020 697C1070 750 1150 770 1210 778Q1225 770 1218 755C1190 730 1160 710 1140 697M1190 697C1230 720 1245 750 1250 775C1300 770 1310 810 1285 840Q1250 880 1200 878M1235 805L1215 850Q1235 855 1265 815Q1268 800 1235 805ZM1010 795C1020 840 1080 860 1100 830',
            'M850 1028C820 1020 740 990 690 970C640 945 640 870 710 865C720 830 760 830 775 842C820 810 890 840 885 900L880 938C910 960 910 1020 850 1028ZM830 935C825 970 780 975 760 945C745 905 780 880 825 905M825 890L830 910L808 905',
            'M535 770L587 810L550 825L520 853ZM955 1065L1048 1018L1017 1118L1000 1080Z',
            'M722 1205C730 1140 780 1080 840 1075C900 1070 945 1110 942 1180Q940 1200 920 1205L745 1223Q722 1225 722 1205Z',
            'M1345 990C1350 950 1400 935 1450 940C1500 935 1568 960 1568 960M1345 990C1360 1080 1400 1150 1470 1163H1568M1425 940L1370 1050M1455 943L1393 1085M1568 1055L1532 1160M1443 998L1555 1058M1468 988L1455 1020M1498 1005L1483 1035M1528 1020L1510 1050M1550 1035L1535 1072M1530 793C1470 810 1455 870 1490 905Q1520 925 1568 905M1530 793C1520 840 1550 860 1568 862',
            // turtle
            'M1205 1060C1200 1000 1245 990 1253 1050M1100 1165C1060 1165 1050 1125 1080 1120L1120 1130M1345 1180C1390 1180 1395 1220 1360 1225L1325 1220M1130 1280L1080 1320M1100 1235L1045 1280Q1035 1300 1050 1320L1080 1320M1240 1050C1300 1045 1355 1100 1348 1170C1345 1250 1290 1300 1205 1300C1130 1290 1085 1220 1100 1150C1120 1100 1180 1060 1240 1050ZM1245 1112C1285 1110 1295 1160 1280 1185C1260 1230 1220 1245 1190 1235C1150 1215 1150 1170 1180 1145Q1215 1110 1245 1112ZM1235 1055L1228 1110M1165 1100L1190 1140M1100 1163L1157 1170M1320 1095L1278 1130M1285 1185L1345 1190M1250 1220L1280 1255M1212 1240L1205 1300M1170 1225L1130 1265',
            'M1400 1320C1380 1300 1385 1265 1420 1268C1430 1240 1480 1240 1485 1275C1520 1275 1530 1310 1510 1320M565 1272C570 1300 600 1305 615 1290Q625 1300 640 1290Q655 1310 680 1300Q700 1280 685 1250M400 1272L435 1320M470 1272L445 1320M285 1272Q300 1285 318 1272'
        ]
    },
    {
        x: 0, y: 1300, sx: 0.35714,
        small: [[306, 196], [644, 251], [807, 176], [776, 36], [1061, 86], [473, 335], [88, 484], [800, 629], [792, 745], [883, 877], [367, 892], [184, 922], [655, 991], [1199, 772], [1257, 990], [1053, 1062], [947, 1285], [1482, 590], [4, 52], [4, 565]],
        medium: [[504, 223], [125, 320], [100, 604], [356, 640], [513, 654], [953, 995], [1355, 979], [1238, 1156], [827, 1262], [1510, 500], [1565, 403], [0, 214]],
        large: [[54, 735], [328, 784], [717, 675]],
        rings: [[174, 788, 6]],
        dots: [[695, 876, 4]],
        sparks: [[103, 1238, 1], [1118, 670, 1]],
        lines: [
            'M60 160L85 150L98 142L128 138Q140 140 145 155L155 185L90 230Q75 230 68 215L54 190Q55 170 60 160Z',
            // banana
            'M135 5H152L150 30C170 90 240 90 265 50Q280 55 278 68C260 130 190 145 150 105Q130 60 135 5ZM138 30C170 115 240 120 272 75M178 5L192 68M365 0C375 60 370 85 350 95L250 115M390 0C395 60 380 90 340 98',
            'M372 118L415 98L422 155L458 150L425 227L412 185L390 190Z',
            'M515 0V125Q530 145 548 135L590 68M540 0C570 60 610 90 640 105L650 180Q660 195 675 185L695 155M680 0C690 40 695 60 690 70L755 110Q765 120 750 130L715 142M640 105Q660 100 665 90Q680 90 690 70M665 95L700 155Q715 165 718 150L690 90',
            'M985 0L823 85Q818 95 828 100L885 118L938 58L902 130L940 185Q952 185 955 175ZM1110 0L1115 25Q1125 35 1145 38L1148 68L1195 45L1280 62Q1297 50 1305 0',
            'M1465 45L1380 88L1472 102M1498 145L1475 245L1545 175',
            'M975 300C1020 190 1110 130 1210 127C1340 130 1450 220 1467 370M1095 350C1120 290 1170 268 1210 268C1270 270 1310 300 1328 350M1088 233Q1125 205 1163 198M1235 198Q1275 205 1310 228M1365 278Q1390 310 1400 350M1040 290L1022 335M1170 350L1197 342V352',
            'M855 350V290M912 305V290M850 290H915Q930 265 915 242Q885 235 855 242Q830 255 840 275Q843 290 855 290M845 352L930 300Q950 295 970 305L1045 352M690 350L745 243L797 350M565 350L595 312L622 350M755 340L790 350',
            'M190 345L180 283L242 273M190 350L265 262L400 350M205 180C225 200 205 210 210 225L225 260M255 350L385 345',
            'M0 285L62 315L50 385Q30 395 0 390M0 320Q30 325 60 320M35 390L0 470',
            // key
            'M192 600L172 697C120 695 110 740 118 775C130 820 160 830 205 828C250 810 250 720 215 710L218 680L228 660L222 645L232 625L238 600M130 805L92 850L108 868L170 795',
            'M0 850C60 840 110 870 108 930C90 970 75 1000 80 1080C60 1160 30 1175 0 1170M105 870C140 900 130 960 122 1000M108 1080C90 1180 50 1200 0 1200M18 935Q25 960 45 955M0 965H10M0 1075L22 1078M0 1040Q15 1050 22 1030',
            'M222 1000L262 870Q272 850 288 868L370 985L355 998',
            // prawn on a line
            'M480 975C430 930 415 890 418 840C430 760 490 730 560 730C620 740 650 780 655 800L715 935L700 938L605 870C580 840 600 800 650 800M520 850C500 870 500 900 520 950L485 975L492 998M460 775C465 810 490 840 515 850M425 890L502 905M435 800C450 840 480 860 505 868M535 735C500 770 510 820 530 845M610 750C560 760 530 800 550 840L590 858M520 950L582 985V1000M520 955L555 998M530 850V870M545 855L550 872M565 855L575 870M715 935C740 950 800 950 805 890C800 830 760 790 700 755C640 715 600 680 640 618M720 940C780 990 860 970 900 920C960 860 1010 900 995 915C980 930 950 920 960 895C980 850 1020 845 1040 848Q1070 840 1082 808',
            // beanie
            'M855 775C850 690 890 650 940 645C1000 650 1030 690 1037 740M860 775L1030 740Q1050 740 1053 765V785Q1050 795 1035 797L880 828Q855 830 850 805Q848 780 860 775ZM925 610L932 602L935 618L950 608L948 625L962 630L950 640L962 655L945 655L945 672L932 662L925 678L918 662L905 672L905 655L888 655L900 640L888 628L903 625L902 608L917 618L918 602Z',
            'M1275 600C1240 740 1310 930 1526 938M1408 600C1380 700 1420 795 1530 795M1348 600L1340 625M1340 702Q1350 750 1370 782M1420 838Q1450 860 1490 865',
            // hammer
            'M1035 890L1060 882L1080 958L1055 967ZM1065 905C1080 860 1130 835 1180 842C1220 850 1250 880 1254 912C1230 910 1200 900 1185 940L1188 970L1128 988C1115 950 1100 935 1078 945M1135 990L1165 1110L1217 1093L1190 975',
            // drum
            'M1288 1135L1500 988L1520 1020L1305 1165ZM1292 1125Q1285 1100 1310 1085L1460 985Q1480 975 1490 990M1320 1160C1360 1220 1400 1250 1440 1250C1520 1240 1560 1180 1545 1130L1510 1030M1375 1125L1405 1240M1375 1125L1490 1225M1450 1075L1490 1225M1450 1075L1545 1155M1440 1250L1470 1314M1535 1190L1568 1225',
            'M958 1092C1050 1150 1150 1200 1215 1220Q1265 1245 1258 1314M935 1225L1085 1314M1085 1265L1120 1280M1130 1215Q1160 1215 1155 1240L1130 1300Q1100 1310 1090 1290L1110 1235ZM1105 1240L1150 1255M500 1314Q495 1280 550 1248M625 1248L590 1314M625 1248L635 1255L650 1248L690 1268L705 1250M215 1314Q270 1275 330 1314'
        ]
    },
    {
        x: 540, y: 1300, sx: 0.34439,
        small: [[49, 295], [257, 273], [610, 457], [308, 824], [1125, 380], [1462, 565], [1328, 1019], [1481, 1236], [134, 1170], [437, 1233], [575, 1262], [1568, 50]],
        medium: [[709, 510], [1347, 530], [1486, 842], [139, 1015], [480, 1135], [1340, 1172], [1555, 215]],
        rings: [[447, 388, 17], [83, 55, 43], [1505, 1052, 24]],
        dots: [[67, 9, 2], [105, 16, 2], [463, 410, 2], [853, 553, 3]],
        sparks: [[343, 548, 1], [1497, 132, 1], [570, 992, 1]],
        lines: [
            'M215 50L285 5L270 0M205 95L265 180L172 148M135 172L138 275L82 185M0 205L30 178M15 15C15 70 50 100 85 98C120 98 148 70 148 40',
            'M370 277C310 300 300 350 320 390C350 430 400 490 460 497C530 495 560 440 552 400C535 370 545 350 560 335C575 310 580 290 575 275M465 365Q480 370 478 390',
            // terraced houses
            'M662 275L685 445L1033 400L1015 275M828 275L847 420M703 297L733 292L737 320L707 325ZM763 288L793 283L797 311L767 316ZM880 280L908 276L912 305L884 309ZM940 276L945 303L972 299L966 275M745 437L737 367L773 361L783 430M925 410L915 343L950 338L962 405',
            // palm island
            'M125 412C80 370 30 370 25 405C25 440 70 435 98 440C60 480 40 520 60 535C90 535 100 490 130 450C115 500 110 540 145 548C170 540 160 490 155 458C180 490 220 500 222 470C220 445 190 435 168 435C220 430 260 400 248 375C225 355 180 370 150 410C180 370 200 320 175 312C140 320 125 370 125 412ZM165 480Q195 540 192 632M205 490Q245 550 247 637M14 938C110 940 220 890 258 768M15 795Q60 790 90 768M-30 690C0 620 100 570 155 645M-60 703H80M36 762C110 610 290 570 388 762ZM40 857L105 830M160 795L187 768',
            // croissant
            'M430 725C400 700 405 670 418 645C410 610 430 590 455 570C470 545 510 525 538 522Q580 520 622 555C660 555 680 590 672 615C700 630 700 660 690 675M455 570L530 670Q555 680 555 655L538 522M418 645Q425 655 505 692L522 665M430 725Q470 730 495 720L505 690M622 555L605 650Q620 665 635 650Q665 640 672 612M560 650H605M430 725C430 770 460 785 495 783Q510 770 490 755Q470 750 475 728M645 655Q655 660 655 675',
            'M840 497L892 532Q910 550 903 570L885 595Q870 605 855 598L800 555Z',
            'M1012 465C1005 435 1040 420 1038 440L1035 462C1065 455 1080 475 1065 490L1040 492C1055 520 1050 535 1040 530L1022 508C1005 525 990 530 985 518C985 505 1000 500 1005 490C980 485 970 465 980 458Z',
            'M1178 480Q1200 465 1210 480L1212 508L1248 505L1250 528L1218 535L1220 570L1195 578L1187 540L1152 542L1148 520L1182 512ZM1232 372L1340 350L1315 442L1295 400ZM1292 608L1337 640L1300 675L1262 652Z',
            'M1475 675L1460 640L1510 618L1515 670L1550 672L1518 745L1500 708L1475 712M935 675C905 610 1000 570 1028 630C1030 560 1120 555 1128 635C1170 615 1210 640 1200 675M990 675C1020 645 1070 645 1105 675M750 675Q760 655 780 660H822V675M795 660V675',
            'M1410 270Q1400 265 1395 345Q1450 385 1568 392M1410 270Q1450 300 1568 320M1415 265Q1500 260 1568 290M1405 355L1418 485Q1470 515 1545 512L1568 450M1103 275C1140 340 1270 340 1305 275M1140 280L1155 305M1225 312L1240 285H1260',
            // surfboard
            'M470 828Q485 835 482 860C480 1000 380 1200 210 1252Q190 1255 190 1235C180 1100 250 900 470 828ZM470 835L375 975M280 1135L195 1245M280 1135V1010L318 1030L345 965L398 1002L345 1087L322 1073Z',
            // laptop
            'M640 922L690 1195Q700 1225 730 1222L1260 1120Q1285 1110 1282 1080L1255 922M835 922L852 1020M695 970L806 948M710 1058L825 1037M675 1125L575 1143L695 1314M780 1314L1190 1265Q1225 1260 1225 1228L890 1285M1000 1175L1070 1252M945 922L852 1020C820 1060 830 1120 870 1165L890 1188L940 1183L1065 1155L1045 1025L930 1050M970 1040Q945 990 968 942M1190 922Q1215 950 1220 1000L1240 1120M1085 1035V1005Q1085 995 1100 992L1200 972Q1215 970 1215 985M1048 1035L1085 1020M1075 1045C1150 1005 1175 1040 1170 1085C1165 1130 1140 1150 1080 1155M1350 920C1360 955 1400 955 1405 915',
            'M1568 865C1500 930 1420 960 1400 1030C1385 1120 1450 1195 1568 1198M1475 975Q1480 1005 1460 1010L1450 995M1485 1090Q1505 1108 1530 1098M1500 1010C1495 1040 1520 1045 1525 1035M1530 1020Q1540 1025 1545 1035M1545 905Q1550 930 1568 935M1545 940Q1550 960 1568 965',
            'M0 1010L10 1020M0 1030C50 1110 40 1180 0 1215M0 1120L32 1152M30 1190L120 1295L100 1314M85 1268L30 1314M180 1300L195 1278L225 1308L250 1285Q270 1290 270 1314M360 1314C380 1285 420 1285 432 1314M1262 1314Q1260 1300 1285 1298L1420 1272Q1435 1272 1440 1314M1270 1314L1415 1295L1420 1314M535 870Q525 850 540 835'
        ]
    }
];

const DoodleTile: React.FC<{ tile: Tile }> = ({ tile }) => {
    const circle = ([x, y, r]: number[], key: string, radius = r) => (
        <circle key={key} cx={tile.x + x * tile.sx} cy={tile.y + y * SY} r={radius} />
    );

    return (
        <g>
            {tile.small.map((c, i) => circle(c, `s${i}`, 5.5))}
            {tile.medium.map((c, i) => circle(c, `m${i}`, 9.5))}
            {tile.large?.map((c, i) => circle(c, `l${i}`, 13))}
            {tile.rings?.map((c, i) => circle(c, `r${i}`))}
            <g fill="#20262a" stroke="none">{tile.dots?.map((c, i) => circle(c, `d${i}`))}</g>
            {tile.sparks?.map(([x, y, s], i) => (
                <path
                    key={i}
                    vectorEffect="non-scaling-stroke"
                    transform={`translate(${tile.x + x * tile.sx} ${tile.y + y * SY}) scale(${s})`}
                    d="M-2-17Q3-4 17-3Q4 3 3 17Q-3 5-17 2Q-4-3-2-17Z"
                />
            ))}
            {tile.letters?.map((l) => {
                const outlined = l.size > 40;
                return (
                    <text
                        key={l.value}
                        transform={`translate(${l.x} ${l.y}) rotate(${l.turn})`}
                        textAnchor="middle"
                        fontSize={l.size}
                        fontStyle={outlined ? 'normal' : 'italic'}
                        fill={outlined ? 'none' : '#20262a'}
                        stroke={outlined ? '#20262a' : 'none'}
                        strokeWidth="2"
                    >
                        {l.value}
                    </text>
                );
            })}
            <g transform={`translate(${tile.x} ${tile.y}) scale(${tile.sx} ${SY})`}>
                {tile.pills?.map(([x, y, w, h], i) => (
                    <rect key={i} x={x} y={y} width={w} height={h} rx="19" vectorEffect="non-scaling-stroke" />
                ))}
                {tile.lines.map((d, i) => (
                    <path key={i} d={d} vectorEffect="non-scaling-stroke" />
                ))}
            </g>
        </g>
    );
};

const Wallpaper: React.FC = () => (
    <svg
        className="absolute inset-0 w-full h-full"
        viewBox="0 0 1080 1738"
        preserveAspectRatio="xMidYMin slice"
        fill="none"
        stroke="#20262a"
        strokeWidth="2.6"
        strokeLinecap="round"
        strokeLinejoin="round"
        aria-hidden="true"
    >
        {tiles.map((tile, i) => (
            <DoodleTile key={i} tile={tile} />
        ))}
    </svg>
);

const SobEmoji: React.FC = () => (
    <svg width="110" height="112" viewBox="316 52 330 336" role="img" aria-label="Loudly crying face">
        <defs>
            <radialGradient id="sob-face" cx="0.5" cy="0.55" r="0.52">
                <stop offset="0" stopColor="#fbe43c" />
                <stop offset="0.6" stopColor="#fbcf2d" />
                <stop offset="0.85" stopColor="#f9ae27" />
                <stop offset="1" stopColor="#f28a1c" />
            </radialGradient>
            <linearGradient id="sob-shine" x1="0" y1="0" x2="0" y2="1">
                <stop offset="0" stopColor="#fdeed2" />
                <stop offset="0.5" stopColor="#fce890" stopOpacity="0.85" />
                <stop offset="1" stopColor="#fbe04a" stopOpacity="0" />
            </linearGradient>
            <linearGradient id="sob-mouth" x1="0" y1="0" x2="0" y2="1">
                <stop offset="0" stopColor="#553003" />
                <stop offset="1" stopColor="#8a5000" />
            </linearGradient>
            <linearGradient id="sob-tear" x1="0" y1="0" x2="1" y2="0">
                <stop offset="0" stopColor="#29a9dc" />
                <stop offset="0.25" stopColor="#8fe6f4" />
                <stop offset="0.5" stopColor="#5fcdea" />
                <stop offset="0.75" stopColor="#9cecf5" />
                <stop offset="1" stopColor="#2eaadb" />
            </linearGradient>
            <radialGradient id="sob-pool" cx="0.5" cy="0.5" r="0.5">
                <stop offset="0" stopColor="#c9f1f6" />
                <stop offset="0.5" stopColor="#7cd9ee" />
                <stop offset="1" stopColor="#1da6e2" />
            </radialGradient>
        </defs>
        <circle cx="481" cy="216" r="162" fill="url(#sob-face)" />
        <path d="M361 190C350 120 400 72 481 71C562 72 612 120 603 190C560 215 402 215 361 190Z" fill="url(#sob-shine)" />
        <g fill="#7b4a08">
            <path d="M360 148Q400 140 425 105Q432 105 430 116Q410 150 364 152Z" />
            <path d="M605 148Q563 140 538 105Q532 105 534 116Q554 150 601 152Z" />
            <path d="M374 181Q388 166 410 167Q436 168 440 184Q424 182 410 180Q392 177 374 181Z" />
            <path d="M589 181Q575 166 554 167Q527 168 523 184Q539 182 554 180Q572 177 589 181Z" />
        </g>
        <path
            d="M424 278C426 238 450 220 482 220C514 220 538 240 540 278Q538 296 524 289Q482 266 440 289Q424 296 424 278Z"
            fill="url(#sob-mouth)"
        />
        <path d="M378 184Q396 172 418 182L416 335H368Z" fill="url(#sob-tear)" />
        <path d="M585 184Q567 172 547 182L543 335H595Z" fill="url(#sob-tear)" />
        <path
            d="M328 360C340 345 362 348 372 335C395 318 428 322 438 344C470 349 500 349 526 344C536 322 570 318 592 335C602 348 628 345 641 357C626 372 595 369 568 378C530 388 440 388 404 377C375 371 345 376 328 360Z"
            fill="url(#sob-pool)"
        />
        <path d="M384 186Q396 178 412 185L410 235Q398 205 384 225Z" fill="#c9fbff" opacity="0.85" />
        <path d="M580 186Q568 178 552 185L554 235Q566 205 580 225Z" fill="#c9fbff" opacity="0.85" />
        <ellipse cx="418" cy="332" rx="13" ry="8" fill="#b5f0f8" />
        <ellipse cx="546" cy="334" rx="13" ry="8" fill="#b5f0f8" />
        <ellipse cx="481" cy="364" rx="50" ry="11" fill="#cdeff2" opacity="0.7" />
    </svg>
);

const ZanyEmoji: React.FC = () => (
    <svg width="110" height="112" viewBox="134 55 330 336" role="img" aria-label="Zany face">
        <defs>
            <radialGradient id="zany-face" cx="0.5" cy="0.52" r="0.52">
                <stop offset="0" stopColor="#fde23c" />
                <stop offset="0.6" stopColor="#fccf2f" />
                <stop offset="0.85" stopColor="#fab02b" />
                <stop offset="1" stopColor="#f28a1c" />
            </radialGradient>
            <linearGradient id="zany-shine" x1="0" y1="0" x2="0" y2="1">
                <stop offset="0" stopColor="#fdeeba" />
                <stop offset="1" stopColor="#fde14a" stopOpacity="0" />
            </linearGradient>
            <radialGradient id="zany-eye">
                <stop offset="0.5" stopColor="#ffffff" />
                <stop offset="1" stopColor="#cfcfd4" />
            </radialGradient>
        </defs>
        <circle cx="299" cy="219" r="162" fill="url(#zany-face)" />
        <path d="M180 165C200 100 250 72 305 73C370 75 420 120 424 170C390 215 220 215 180 165Z" fill="url(#zany-shine)" />
        <circle cx="241" cy="182" r="58" fill="#f5a623" opacity="0.45" />
        <circle cx="242" cy="187" r="53" fill="url(#zany-eye)" />
        <circle cx="241" cy="186" r="25" fill="#232225" />
        <circle cx="241" cy="176" r="10" fill="#8d8c90" />
        <circle cx="357" cy="184" r="21" fill="#7a4708" />
        <ellipse cx="357" cy="175" rx="12" ry="9" fill="#b48a5c" />
        <path
            d="M190 262C265 274 345 258 415 219C423 275 395 338 325 346C255 350 197 312 190 262Z"
            fill="#8a4f00"
            stroke="#5d3600"
            strokeWidth="5"
            strokeLinejoin="round"
        />
        <path d="M196 268C270 279 345 263 411 226L408 259C355 290 265 302 210 297Q198 284 196 268Z" fill="#f1f0f3" />
        <path d="M227 300Q270 293 315 298Q321 325 318 352Q307 389 272 389Q235 387 228 347Z" fill="#ff8f93" />
        <path d="M272 302V340" stroke="#e66a72" strokeWidth="4" strokeLinecap="round" />
    </svg>
);

const ReadTicks: React.FC = () => (
    <svg
        className="mb-[7px] ml-2"
        width="42"
        height="26"
        viewBox="1060 178 126 78"
        fill="none"
        stroke="#53bdeb"
        strokeWidth="9"
        role="img"
        aria-label="Read"
    >
        <path d="M1063 222L1089 248L1143 182M1117 237L1128 249L1181 182" />
    </svg>
);

const MessageMeta: React.FC<{ side: Side; time: string }> = ({ side, time }) => (
    <div className="flex items-end">
        <time className={clsx('text-[30px] leading-9', side === 'in' ? 'text-[#8b9296]' : 'text-[#8c9394]')}>{time}</time>
        {side === 'out' && <ReadTicks />}
    </div>
);

const Tail: React.FC<{ side: Side }> = ({ side }) => (
    <svg
        className={clsx('shrink-0', side === 'in' ? '-mr-px text-[#1f272a]' : '-ml-px -scale-x-100 text-[#144d37]')}
        width="18"
        height="28"
        viewBox="0 0 18 28"
        fill="currentColor"
        aria-hidden="true"
    >
        <path d="M18 0H4Q-2 1 1 6L18 27Z" />
    </svg>
);

const TextMessage: React.FC<{ message: Message }> = ({ message }) => {
    const { side, tail, text, time } = message;

    return (
        <div className={clsx('flex items-start', side === 'out' && 'flex-row-reverse', !tail && 'ml-[17px]')}>
            {tail && <Tail side={side} />}
            <div
                className={clsx(
                    'flex items-end rounded-[30px]',
                    side === 'in' ? 'bg-[#1f272a] gap-9 pl-[25px] pr-5' : 'bg-[#144d37] gap-5 pl-[25px] pr-[21px]',
                    tail && (side === 'in' ? 'rounded-tl-none' : 'rounded-tr-none')
                )}
            >
                <p className="pt-4 pb-[18px] text-[40px] leading-[48px] text-[#f7f8fa]">{text}</p>
                <div className={side === 'in' ? 'pb-[7px]' : 'pb-2.5'}>
                    <MessageMeta side={side} time={time} />
                </div>
            </div>
        </div>
    );
};

const EmojiMessage: React.FC<{ message: Message }> = ({ message }) => {
    const { side, emoji, time } = message;

    return (
        <div className={clsx('flex flex-col gap-[11px]', side === 'in' ? 'items-start ml-[18px]' : 'items-end mr-[19px]')}>
            {emoji === 'sob' ? <SobEmoji /> : <ZanyEmoji />}
            <div
                className={clsx(
                    'rounded-[32px] pt-[19px] pb-[13px]',
                    side === 'in' ? 'bg-[#1f272a] ml-1 pl-5 pr-[19px]' : 'bg-[#144d37] mr-[3px] pl-[19px] pr-[18px]'
                )}
            >
                <MessageMeta side={side} time={time} />
            </div>
        </div>
    );
};

const App: React.FC = () => {
    return (
        <main className="relative min-h-screen overflow-hidden bg-[#0b1014] font-['Roboto','Noto_Sans_CJK_SC',sans-serif]">
            <Wallpaper />
            <ul className="relative flex flex-col px-[26px] pt-2.5 pb-[22px]">
                {messages.map((message) => (
                    <li
                        key={message.id}
                        className={clsx('flex', message.side === 'in' ? 'justify-start' : 'justify-end', message.spacing)}
                    >
                        {message.emoji ? <EmojiMessage message={message} /> : <TextMessage message={message} />}
                    </li>
                ))}
            </ul>
        </main>
    );
};

export default App;
